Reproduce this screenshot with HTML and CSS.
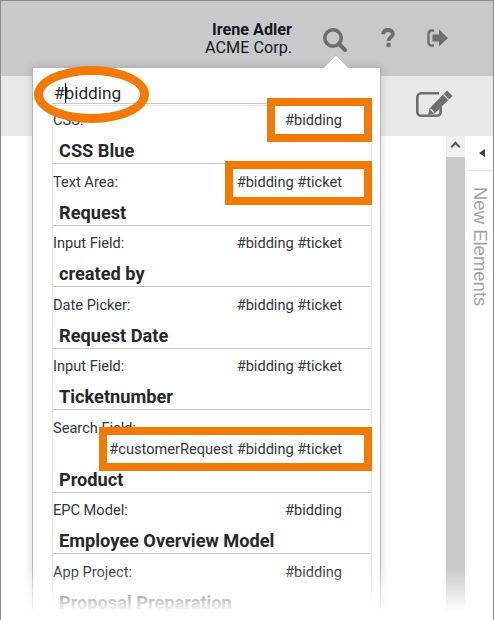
FILE: index.html
```html
<!DOCTYPE html>
<html lang="en">
<head>
    <meta charset="UTF-8">
    <meta name="viewport" content="width=device-width, initial-scale=1.0">
    <title>Search</title>
    <link rel="stylesheet" href="styles.css">
</head>
<body>
    <div class="app">
        <header class="topbar">
            <div class="user">
                <strong>Irene Adler</strong>
                <span>ACME Corp.</span>
            </div>
            <svg class="top-icon search-icon" viewBox="0 0 24 24" width="24" height="24">
                <circle cx="10" cy="10" r="8.200" fill="none" stroke="#6d6e70" stroke-width="3.600"/>
                <path d="M16 16l6 6" stroke="#6d6e70" stroke-width="4" stroke-linecap="round"/>
            </svg>
            <svg class="top-icon help-icon" viewBox="0 0 14 19" width="14" height="19">
                <path d="M2 6.200C2.400 3.400 4.300 2 7 2c2.800 0 4.900 1.500 4.900 3.900 0 3.300-4.400 3.400-4.400 7" fill="none" stroke="#6d6e70" stroke-width="3.800"/>
                <rect x="5.500" y="14.800" width="4.100" height="4.100" fill="#6d6e70"/>
            </svg>
            <svg class="top-icon logout-icon" viewBox="0 0 21 18" width="21" height="18">
                <path d="M7 1.500H4.500a3 3 0 0 0-3 3v9a3 3 0 0 0 3 3H7" fill="none" stroke="#6d6e70" stroke-width="2.400"/>
                <path d="M5.500 5.500h6.500V.5L21 9l-9 8.500v-5H5.500z" fill="#6d6e70"/>
            </svg>
        </header>

        <div class="toolbar">
            <svg class="edit-icon" viewBox="0 0 37 27" width="37" height="27">
                <path d="M23 3.300H5.300a4 4 0 0 0-4 4v14.400a4 4 0 0 0 4 4h15.400a4 4 0 0 0 4-4V17" fill="none" stroke="#6d6e70" stroke-width="2.600"/>
                <path d="M31 .5l5.500 5.500-18 17.500-6.500 1.500 1.500-6.500z" fill="#6d6e70"/>
                <path d="M27.500 4.500l5 5M14.500 19l3.500 3.500" stroke="#e9e9e9" stroke-width="1.200"/>
            </svg>
        </div>

        <main class="workspace">
            <div class="canvas"></div>
            <div class="scrollbar">
                <div class="scroll-up"><span class="chevron"></span></div>
                <div class="scroll-thumb"></div>
            </div>
            <aside class="side-panel">
                <div class="side-toggle"><span class="arrow-left"></span></div>
                <div class="side-title">New Elements</div>
            </aside>
        </main>

        <section class="popup">
            <div class="search-box">#<span class="caret"></span>bidding</div>
            <div class="results">
                <div class="item"><span>CSS:</span><span class="tags">#bidding</span></div>
                <h3>CSS Blue</h3>
                <div class="item"><span>Text Area:</span><span class="tags">#bidding #ticket</span></div>
                <h3>Request</h3>
                <div class="item"><span>Input Field:</span><span class="tags">#bidding #ticket</span></div>
                <h3>created by</h3>
                <div class="item"><span>Date Picker:</span><span class="tags">#bidding #ticket</span></div>
                <h3>Request Date</h3>
                <div class="item"><span>Input Field:</span><span class="tags">#bidding #ticket</span></div>
                <h3>Ticketnumber</h3>
                <div class="item item-wrap"><span>Search Field:</span><span class="tags">#customerRequest #bidding #ticket</span></div>
                <h3>Product</h3>
                <div class="item"><span>EPC Model:</span><span class="tags">#bidding</span></div>
                <h3>Employee Overview Model</h3>
                <div class="item"><span>App Project:</span><span class="tags">#bidding</span></div>
                <h3>Proposal Preparation</h3>
            </div>
            <div class="popup-arrow"></div>
        </section>

        <div class="mark mark-oval"></div>
        <div class="mark mark-css"></div>
        <div class="mark mark-area"></div>
        <div class="mark mark-search"></div>
        <div class="fade"></div>
    </div>
</body>
</html>
```

FILE: styles.css
```css
* {
    box-sizing: border-box;
}

html, body {
    margin: 0;
    height: 100%;
    background-color: #fff;
}

body {
    font-family: Roboto, "Liberation Sans", sans-serif;
    color: #26282c;
    overflow: hidden;
}

.app {
    position: relative;
    display: flex;
    flex-direction: column;
    height: 620px;
    border: 1px solid #8b8c8e;
    border-bottom: 0;
    overflow: hidden;
}

.topbar {
    display: flex;
    align-items: flex-start;
    height: 75px;
    padding: 20px 0 0 0;
    background-color: #c8c9cb;
}

.user {
    display: flex;
    flex-direction: column;
    align-items: flex-end;
    width: 291px;
    font-size: 16.200px;
    line-height: 18px;
    color: #15171a;
}

.top-icon {
    display: block;
}

.search-icon {
    margin: 7px 0 0 31px;
}

.help-icon {
    margin: 7px 0 0 34px;
}

.logout-icon {
    margin: 8px 0 0 32px;
}

.toolbar {
    display: flex;
    justify-content: flex-end;
    align-items: center;
    height: 60px;
    padding: 0 40px 5px 0;
    background-color: #e9e9e9;
}

.workspace {
    display: flex;
    flex: 1;
}

.canvas {
    flex: 1;
}

.scrollbar {
    display: flex;
    flex-direction: column;
    width: 19px;
    margin-right: 2px;
    background-color: #c8c9cb;
}

.scroll-up {
    display: flex;
    justify-content: center;
    height: 21px;
    padding-top: 7px;
    background-color: #f1f1f1;
}

.chevron {
    width: 7px;
    height: 7px;
    border: solid #55565a;
    border-width: 2px 0 0 2px;
    transform: rotate(45deg);
}

.side-panel {
    width: 26px;
}

.side-toggle {
    display: flex;
    justify-content: center;
    align-items: center;
    height: 35px;
    padding-left: 3px;
    border-bottom: 1px solid #e6e6e6;
}

.arrow-left {
    border-style: solid;
    border-width: 4.500px 6px 4.500px 0;
    border-color: transparent #3f4044 transparent transparent;
}

.side-title {
    margin-top: 16px;
    padding-left: 2px;
    writing-mode: vertical-rl;
    font-family: "Liberation Sans", sans-serif;
    font-size: 18.500px;
    line-height: 22px;
    color: #a3a4a6;
}

.popup {
    position: absolute;
    left: 31px;
    top: 66px;
    width: 349px;
    height: 560px;
    padding: 0 0 0 19px;
    background-color: #fff;
    border: 1px solid #b5b6b8;
    box-shadow: 0 0 9px rgba(0, 0, 0, 0.16);
}

.popup-arrow {
    position: absolute;
    left: 294px;
    top: -10px;
    width: 18px;
    height: 18px;
    background-color: #fff;
    transform: rotate(45deg);
    border: solid #b5b6b8;
    border-width: 1px 0 0 1px;
}

.search-box {
    width: 320px;
    height: 36px;
    padding: 15px 0 0 2px;
    font-size: 17.200px;
    line-height: 21px;
    border-bottom: 1px solid #c8c9cb;
}

.caret {
    display: inline-block;
    width: 1px;
    height: 20px;
    margin: 0 -1px -4px 0;
    background-color: #000;
}

.results {
    width: 320px;
    height: 520px;
    margin-top: 1px;
    padding-top: 4px;
    border: solid #e8e8e8;
    border-width: 1px 1px 0 1px;
}

.item {
    display: flex;
    justify-content: space-between;
    height: 20px;
    padding-right: 29px;
    font-size: 14.600px;
    line-height: 20px;
    color: #33363b;
}

h3 + .item {
    margin-top: 7.500px;
}

.item-wrap {
    display: block;
    height: 41px;
    text-align: right;
}

.item-wrap span:first-child {
    display: block;
    margin-bottom: 1px;
    text-align: left;
}

.tags {
    white-space: nowrap;
}

h3 {
    height: 34px;
    width: 317px;
    margin: 0;
    padding: 9px 0 0 6px;
    font-size: 18.200px;
    line-height: 24px;
    font-weight: 700;
    color: #26282c;
    border-bottom: 1px solid #c8c9cb;
}

.mark {
    position: absolute;
    border: 8px solid #f27a00;
}

.mark-oval {
    left: 33px;
    top: 65px;
    width: 115px;
    height: 57px;
    border-width: 9px;
    border-radius: 50%;
}

.mark-css {
    left: 266px;
    top: 97px;
    width: 105px;
    height: 44px;
}

.mark-area {
    left: 224px;
    top: 160px;
    width: 147px;
    height: 44px;
}

.mark-search {
    left: 98px;
    top: 426px;
    width: 273px;
    height: 44px;
}

.fade {
    position: absolute;
    left: -1px;
    right: -1px;
    bottom: 0;
    height: 52px;
    background: linear-gradient(to bottom, rgba(255, 255, 255, 0), #fff 85%);
}
```
